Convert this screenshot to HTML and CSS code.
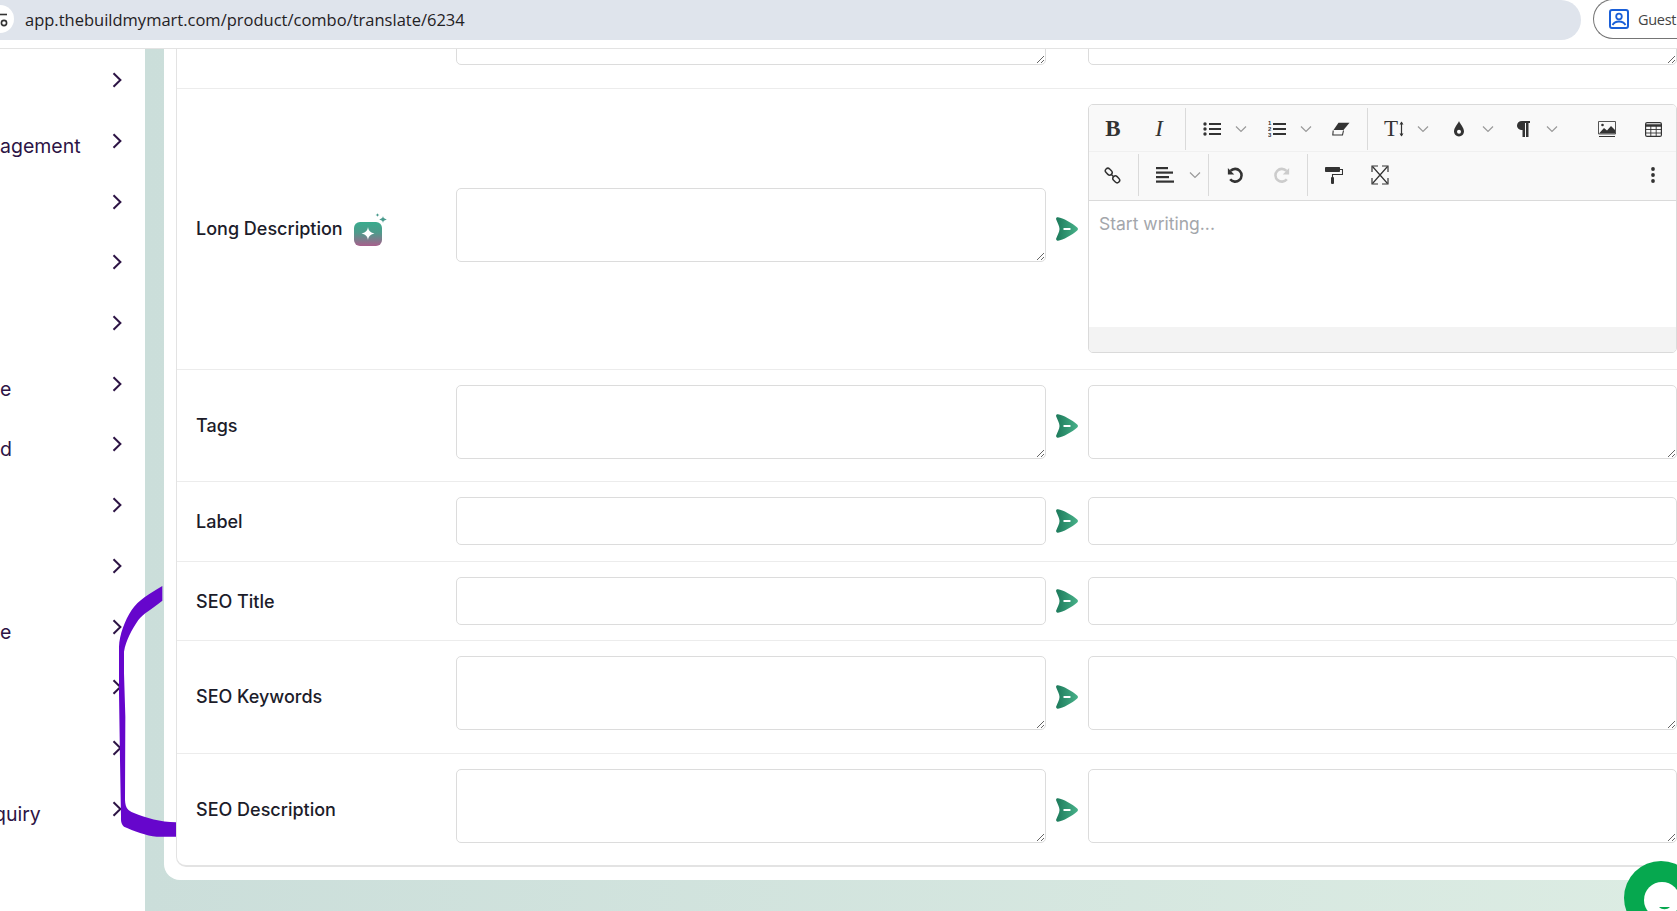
FILE: index.html
```html
<!DOCTYPE html>
<html lang="en">
<head>
  <meta charset="UTF-8">
  <meta name="viewport" content="width=device-width, initial-scale=1.0">
  <title>Combo Translate</title>
  <link rel="stylesheet" href="styles.css">
</head>
<body>
  <!-- shared icons -->
  <svg class="sprite" width="0" height="0">
    <symbol id="chev" viewBox="0 0 10 16"><path d="M1.5 1.2 8.4 8 1.5 14.8" fill="none" stroke="currentColor" stroke-width="2"/></symbol>
    <symbol id="caret" viewBox="0 0 12 8"><path d="M1 1.5 6 6.5 11 1.5" fill="none" stroke="#9a9a9a" stroke-width="1.2"/></symbol>
    <symbol id="send" viewBox="0 0 22 24">
      <path d="M2 .3C7 1 16 6 21.2 10.500c1 .9 1 2 0 2.900C16 18 7 23 2 23.700.5 24-.2 22.500.2 21.500 1.500 18 3.500 15 3.500 12 3.500 9 1.500 6 .2 2.500-.2 1 .6.100 2 .3Z" fill="url(#sendFill)"/>
      <rect x="7.300" y="11.100" width="7.400" height="1.800" rx=".9" fill="#fff"/>
    </symbol>
    <linearGradient id="sendFill" x1="0" x2="1" y1="0" y2="0">
      <stop offset="0" stop-color="#1d7a5b"/>
      <stop offset="1" stop-color="#47b189"/>
    </linearGradient>
    <linearGradient id="aiFill" x1="0" x2="0" y1="0" y2="1">
      <stop offset="0" stop-color="#39ab8d"/>
      <stop offset=".45" stop-color="#4f9a8b"/>
      <stop offset="1" stop-color="#a85f8c"/>
    </linearGradient>
  </svg>

  <header class="browser-bar">
    <div class="url-pill">
      <span class="site-info">
        <svg width="14" height="38" viewBox="0 0 14 38"><path d="M0 14.500H7" stroke="#333" stroke-width="1.600"/><circle cx="4" cy="23" r="2.600" fill="none" stroke="#333" stroke-width="1.600"/></svg>
      </span>
      <span class="url-text">app.thebuildmymart.com/product/combo/translate/6234</span>
    </div>
    <div class="guest-pill">
      <svg width="20" height="20" viewBox="0 0 20 20"><rect x="1" y="1" width="18" height="18" rx="2" fill="none" stroke="#1a5fd8" stroke-width="2"/><circle cx="10" cy="7.500" r="2.800" fill="none" stroke="#1a5fd8" stroke-width="1.800"/><path d="M3.500 16c1.500-2.700 3.800-3.500 6.500-3.500s5 .8 6.500 3.500" fill="none" stroke="#1a5fd8" stroke-width="1.800"/></svg>
      <span>Guest</span>
    </div>
  </header>

  <div class="app">
    <nav class="sidebar">
      <div class="side-item"><span class="side-label"></span><svg class="chev"><use href="#chev"/></svg></div>
      <div class="side-item"><span class="side-label">agement</span><svg class="chev"><use href="#chev"/></svg></div>
      <div class="side-item"><span class="side-label"></span><svg class="chev"><use href="#chev"/></svg></div>
      <div class="side-item"><span class="side-label"></span><svg class="chev"><use href="#chev"/></svg></div>
      <div class="side-item"><span class="side-label"></span><svg class="chev"><use href="#chev"/></svg></div>
      <div class="side-item"><span class="side-label">e</span><svg class="chev"><use href="#chev"/></svg></div>
      <div class="side-item"><span class="side-label">d</span><svg class="chev"><use href="#chev"/></svg></div>
      <div class="side-item"><span class="side-label"></span><svg class="chev"><use href="#chev"/></svg></div>
      <div class="side-item"><span class="side-label"></span><svg class="chev"><use href="#chev"/></svg></div>
      <div class="side-item"><span class="side-label">e</span><svg class="chev"><use href="#chev"/></svg></div>
      <div class="side-item"><span class="side-label"></span><svg class="chev"><use href="#chev"/></svg></div>
      <div class="side-item"><span class="side-label"></span><svg class="chev"><use href="#chev"/></svg></div>
      <div class="side-item"><span class="side-label side-label-cut">quiry</span><svg class="chev"><use href="#chev"/></svg></div>
    </nav>

    <main class="main">
      <div class="panel">
        <div class="card">
          <div class="row row-first">
            <div class="field-label"></div>
            <textarea class="field"></textarea>
            <div class="send-cell"></div>
            <textarea class="field"></textarea>
          </div>

          <div class="row row-editor">
            <div class="field-label">
              Long Description
              <svg class="ai-icon" width="34" height="34" viewBox="0 0 34 34">
                <rect x="0" y="9" width="28" height="24" rx="6" fill="url(#aiFill)"/>
                <path d="M14 14c.6 3.400 1.700 5.300 6.500 6.500-4.800 1.200-5.900 3.100-6.500 6.500-.6-3.400-1.700-5.300-6.500-6.500 4.800-1.200 5.900-3.100 6.500-6.500Z" fill="#fff"/>
                <path d="M29 3c.3 1.800.9 2.700 3.800 3.500-2.900.8-3.500 1.700-3.800 3.500-.3-1.800-.9-2.700-3.800-3.500C28.100 5.700 28.700 4.800 29 3Z" fill="#4a9b8e"/>
                <path d="M23.500 0c.2 1 .6 1.600 2 2-1.400.4-1.800 1-2 2-.2-1-.6-1.600-2-2 1.400-.4 1.800-1 2-2Z" fill="#4a9b8e"/>
              </svg>
            </div>
            <textarea class="field"></textarea>
            <div class="send-cell"><svg class="send"><use href="#send"/></svg></div>
            <div class="editor">
              <div class="toolbar">
                <div class="tb-row">
                  <span class="tb-btn tb-serif"><b>B</b></span>
                  <span class="tb-btn tb-serif"><i>I</i></span>
                  <span class="tb-sep"></span>
                  <span class="tb-btn"><svg width="18" height="14" viewBox="0 0 18 14"><g fill="#333"><circle cx="2" cy="2" r="1.700"/><circle cx="2" cy="7" r="1.700"/><circle cx="2" cy="12" r="1.700"/><rect x="6" y="1" width="12" height="2"/><rect x="6" y="6" width="12" height="2"/><rect x="6" y="11" width="12" height="2"/></g></svg></span>
                  <svg class="tb-caret"><use href="#caret"/></svg>
                  <span class="tb-btn"><svg width="18" height="18" viewBox="0 0 18 18"><g fill="#333"><text class="ol-num" x="0" y="5">1</text><text class="ol-num" x="0" y="11">2</text><text class="ol-num" x="0" y="17">3</text><rect x="5" y="3" width="13" height="2"/><rect x="5" y="8" width="13" height="2"/><rect x="5" y="13" width="13" height="2"/></g></svg></span>
                  <svg class="tb-caret"><use href="#caret"/></svg>
                  <span class="tb-btn"><svg width="18" height="14" viewBox="0 0 18 14"><path d="M6.500.8H17.500L11.500 8H1.500Z" fill="#333"/><path d="M1.200 8.500 0.800 13H10.500L11.500 8.500" fill="none" stroke="#333" stroke-width="1.100"/></svg></span>
                  <span class="tb-sep"></span>
                  <span class="tb-btn tb-serif tb-font"><span>T</span><svg width="5" height="16" viewBox="0 0 5 16"><path d="M2.500 1V15" stroke="#333" stroke-width="1.200"/><path d="M.5 3.500 2.500 .5 4.500 3.500ZM.5 12.500 2.500 15.500 4.500 12.500Z" fill="#333"/></svg></span>
                  <svg class="tb-caret"><use href="#caret"/></svg>
                  <span class="tb-btn"><svg width="12" height="16" viewBox="0 0 12 16"><path d="M6 0C7 3 11 6.500 11 10.300 11 13.300 8.800 15.500 6 15.500S1 13.300 1 10.300C1 6.500 5 3 6 0Z" fill="#333"/><circle cx="6" cy="10.800" r="2" fill="#fff"/></svg></span>
                  <svg class="tb-caret"><use href="#caret"/></svg>
                  <span class="tb-btn"><svg width="13" height="16" viewBox="0 0 13 16"><path d="M5 0H13V2H11.500V16H9V2H8V16H5.500V9C2 9 0 7 0 4.500S2 0 5 0Z" fill="#333"/></svg></span>
                  <svg class="tb-caret"><use href="#caret"/></svg>
                  <span class="tb-btn tb-push"><svg width="18" height="16" viewBox="0 0 18 16"><path d="M.5.500H17.500V13H.5Z" fill="none" stroke="#555" stroke-width="1"/><path d="M1 15.500H17" stroke="#333" stroke-width="1.200"/><path d="M1 12.500 6 7 9 9.500 13 5 17 9V12.500Z" fill="#333"/><circle cx="4.500" cy="4" r="1.300" fill="#333"/></svg></span>
                  <span class="tb-btn"><svg width="17" height="15" viewBox="0 0 17 15"><rect x=".6" y=".6" width="15.800" height="13.800" rx="1.500" fill="none" stroke="#333" stroke-width="1.200"/><path d="M.6 3.500H16.400" stroke="#333" stroke-width="2.400"/><path d="M.6 7.500H16.400M.6 11H16.400M5.800 3V14M11.200 3V14" stroke="#333" stroke-width=".9"/></svg></span>
                </div>
                <div class="tb-row">
                  <span class="tb-btn"><svg width="17" height="17" viewBox="0 0 17 17"><g fill="none" stroke="#333" stroke-width="1.500"><rect x="1" y="2.200" width="7.500" height="5" rx="2.500" transform="rotate(45 4.750 4.700)"/><rect x="8.500" y="9.800" width="7.500" height="5" rx="2.500" transform="rotate(45 12.250 12.300)"/><path d="M7 7.200 10 10"/></g></svg></span>
                  <span class="tb-sep"></span>
                  <span class="tb-btn"><svg width="18" height="16" viewBox="0 0 18 16"><g fill="#333"><rect x="0" y="0" width="12" height="2.200"/><rect x="0" y="4.500" width="17" height="2.200"/><rect x="0" y="9" width="13" height="2.200"/><rect x="0" y="13.500" width="18" height="2.200"/></g></svg></span>
                  <svg class="tb-caret tb-caret-end"><use href="#caret"/></svg>
                  <span class="tb-sep"></span>
                  <span class="tb-btn"><svg width="17" height="17" viewBox="0 0 16 16"><path d="M3.300 3.700A6 6 0 1 1 3 11.500" fill="none" stroke="#333" stroke-width="2.400"/><path d="M0.800 1V7H6.800Z" fill="#333"/></svg></span>
                  <span class="tb-btn"><svg width="17" height="17" viewBox="0 0 16 16"><path d="M12.700 3.700A6 6 0 1 0 13 11.500" fill="none" stroke="#ccc" stroke-width="2.400"/><path d="M15.200 1V7H9.200Z" fill="#ccc"/></svg></span>
                  <span class="tb-sep"></span>
                  <span class="tb-btn"><svg width="18" height="18" viewBox="0 0 18 18"><rect x="0" y="1" width="15" height="5" rx=".8" fill="#333"/><path d="M15 3.500H17.500V8.500H7.500V11" fill="none" stroke="#333" stroke-width="1.100"/><rect x="6" y="11" width="3" height="7" rx="1" fill="#333"/></svg></span>
                  <span class="tb-btn"><svg width="18" height="20" viewBox="0 0 18 20"><g fill="none" stroke="#333" stroke-width="1.200"><path d="M1 7V1H7M11 1H17V7M17 13V19H11M7 19H1V13"/><path d="M1.500 1.500 16.500 18.500M16.500 1.500 1.500 18.500"/></g></svg></span>
                  <span class="tb-btn tb-push"><svg width="6" height="16" viewBox="0 0 6 16"><g fill="#333"><circle cx="3" cy="2" r="1.900"/><circle cx="3" cy="8" r="1.900"/><circle cx="3" cy="14" r="1.900"/></g></svg></span>
                </div>
              </div>
              <div class="editor-body">Start writing...</div>
              <div class="editor-status"></div>
            </div>
          </div>

          <div class="row row-tight">
            <div class="field-label">Tags</div>
            <textarea class="field"></textarea>
            <div class="send-cell"><svg class="send"><use href="#send"/></svg></div>
            <textarea class="field"></textarea>
          </div>

          <div class="row">
            <div class="field-label">Label</div>
            <input class="field-input" type="text">
            <div class="send-cell"><svg class="send"><use href="#send"/></svg></div>
            <input class="field-input" type="text">
          </div>

          <div class="row row-tight">
            <div class="field-label">SEO Title</div>
            <input class="field-input" type="text">
            <div class="send-cell"><svg class="send"><use href="#send"/></svg></div>
            <input class="field-input" type="text">
          </div>

          <div class="row">
            <div class="field-label">SEO Keywords</div>
            <textarea class="field"></textarea>
            <div class="send-cell"><svg class="send"><use href="#send"/></svg></div>
            <textarea class="field"></textarea>
          </div>

          <div class="row row-tight row-last">
            <div class="field-label">SEO Description</div>
            <textarea class="field"></textarea>
            <div class="send-cell"><svg class="send"><use href="#send"/></svg></div>
            <textarea class="field"></textarea>
          </div>
        </div>
      </div>
    </main>
  </div>

  <!-- hand drawn annotation on top of the screenshot -->
  <svg class="scribble" width="176" height="351" viewBox="0 0 528 1053">
    <path d="M487 78V122C455 148 430 160 415 180 395 210 378 240 372 275V340L376 470 375 720C376 745 385 752 400 758 440 775 480 785 528 787V830H470C440 828 400 812 372 800 362 790 363 780 363 770L360 600 357 400V260C358 225 375 180 395 150 415 120 450 100 487 78Z" fill="#6606cc"/>
  </svg>

  <!-- chat widget -->
  <svg class="chat-widget" width="74" height="74" viewBox="0 0 74 74">
    <circle cx="37" cy="37" r="37" fill="#06a84f"/>
    <circle cx="38" cy="39" r="18" fill="#fff"/>
    <path d="M35 46c3 3 8 3 11 0Z" fill="#06a84f"/>
  </svg>
</body>
</html>
```

FILE: styles.css
```css
* {
  box-sizing: border-box;
}

html,
body {
  height: 100%;
}

body {
  margin: 0;
  display: flex;
  flex-direction: column;
  overflow: hidden;
  background-color: #fff;
  font-family: "Inter", "Noto Sans", sans-serif;
}

.sprite {
  position: absolute;
}

/* browser chrome */
.browser-bar {
  flex: none;
  display: flex;
  height: 49px;
  border-bottom: 1px solid #e3e3e3;
  background-color: #fff;
}

.url-pill {
  flex: none;
  display: flex;
  align-items: center;
  width: 1581px;
  height: 40px;
  padding: 0 0 2px 25px;
  border-radius: 0 20px 20px 0;
  background-color: #dfe4ec;
  position: relative;
}

.site-info {
  position: absolute;
  left: 0;
  top: 5px;
  width: 14px;
  height: 28px;
  border-radius: 0 14px 14px 0;
  background-color: #fff;
}

.site-info svg {
  display: block;
  margin-top: -5px;
}

.url-text {
  font-family: "Open Sans", sans-serif;
  font-size: 16.5px;
  color: #1f2124;
}

.guest-pill {
  flex: none;
  display: flex;
  align-items: center;
  gap: 9px;
  width: 84px;
  height: 40px;
  margin-left: 12px;
  margin-top: -1px;
  padding-left: 15px;
  border: 1px solid #757575;
  border-right: 0;
  border-radius: 20px 0 0 20px;
  font-family: "Open Sans", sans-serif;
  font-size: 14.5px;
  letter-spacing: -0.3px;
  color: #444;
}

/* page */
.app {
  flex: 1;
  min-height: 0;
  display: flex;
  overflow: hidden;
}

.sidebar {
  flex: none;
  width: 145px;
  padding-top: 1px;
  background-color: #fff;
  color: #2d1445;
}

.side-item {
  display: flex;
  align-items: center;
  height: 60.7px;
  padding-right: 23px;
}

.side-label {
  flex: 1;
  font-size: 19.5px;
  padding-top: 10px;
  white-space: nowrap;
  overflow: hidden;
}

.side-label-cut {
  margin-left: -6px;
}

.chev {
  flex: none;
  width: 10px;
  height: 16px;
}

.main {
  flex: 1;
  min-width: 0;
  padding-left: 19px;
  overflow: hidden;
  background: linear-gradient(90deg, #cbdeda, #dcece3);
}

.panel {
  padding: 0 0 13px 12px;
  border-radius: 0 0 0 16px;
  background-color: #fff;
}

.card {
  border-left: 1px solid #e3e3e3;
  border-bottom: 2px solid #e3e3e3;
  border-radius: 0 0 0 10px;
}

/* form rows */
.row {
  display: grid;
  grid-template-columns: 260px 590px 42px 589px;
  align-items: center;
  padding: 15px 0 16px 19px;
  border-bottom: 1px solid #ececec;
}

.row-first {
  margin-top: -73px;
}

.row-tight {
  padding-bottom: 15px;
}

.row-last {
  border-bottom: 0;
}

.field-label {
  display: flex;
  align-items: center;
  gap: 11px;
  font-size: 18px;
  font-weight: 500;
  color: #1c1c2a;
}

.ai-icon {
  margin-top: 2px;
}

.field,
.field-input {
  display: block;
  width: 100%;
  border: 1px solid #dcdcdc;
  border-radius: 5px;
  background-color: #fff;
  outline: none;
}

.field {
  height: 74px;
  margin-bottom: 7px;
  resize: vertical;
}

.field-input {
  height: 48px;
}

.send-cell {
  display: flex;
  padding-left: 10px;
}

.send {
  width: 22px;
  height: 24px;
}

/* rich text editor */
.editor {
  display: flex;
  flex-direction: column;
  height: 249px;
  border: 1px solid #dadada;
  border-radius: 5px;
  overflow: hidden;
}

.toolbar {
  border-bottom: 1px solid #dadada;
  background-color: #f9f9f9;
}

.tb-row {
  display: flex;
  align-items: center;
  height: 46px;
  padding: 2px 0 0 1px;
}

.tb-row + .tb-row {
  height: 49px;
  padding: 0 0 2px 0;
  border-top: 1px solid #f0f0f0;
}

.tb-btn {
  flex: none;
  display: flex;
  align-items: center;
  justify-content: center;
  width: 46px;
}

.tb-serif {
  font-family: "Liberation Serif", serif;
  font-size: 23px;
  color: #333;
}

.tb-serif b {
  font-weight: 700;
}

.tb-font {
  gap: 1px;
}

.tb-sep {
  flex: none;
  width: 1px;
  height: 42px;
  margin: 0 3px;
  background-color: #dadada;
}

.tb-caret {
  flex: none;
  width: 12px;
  height: 8px;
  margin-right: 6.5px;
}

.tb-caret-end {
  margin-left: 1px;
  margin-right: 4px;
}

.tb-push {
  margin-left: auto;
}

.ol-num {
  font-family: "Liberation Sans", sans-serif;
  font-size: 6px;
  font-weight: 700;
}

.editor-body {
  flex: 1;
  padding: 12px 10px;
  font-size: 17.5px;
  color: #a3a6ab;
  background-color: #fff;
}

.editor-status {
  flex: none;
  height: 25px;
  background-color: #f3f3f3;
}

/* things lying over the page */
.scribble {
  position: fixed;
  left: 0;
  top: 560px;
}

.chat-widget {
  position: fixed;
  left: 1624px;
  top: 861px;
}
```
